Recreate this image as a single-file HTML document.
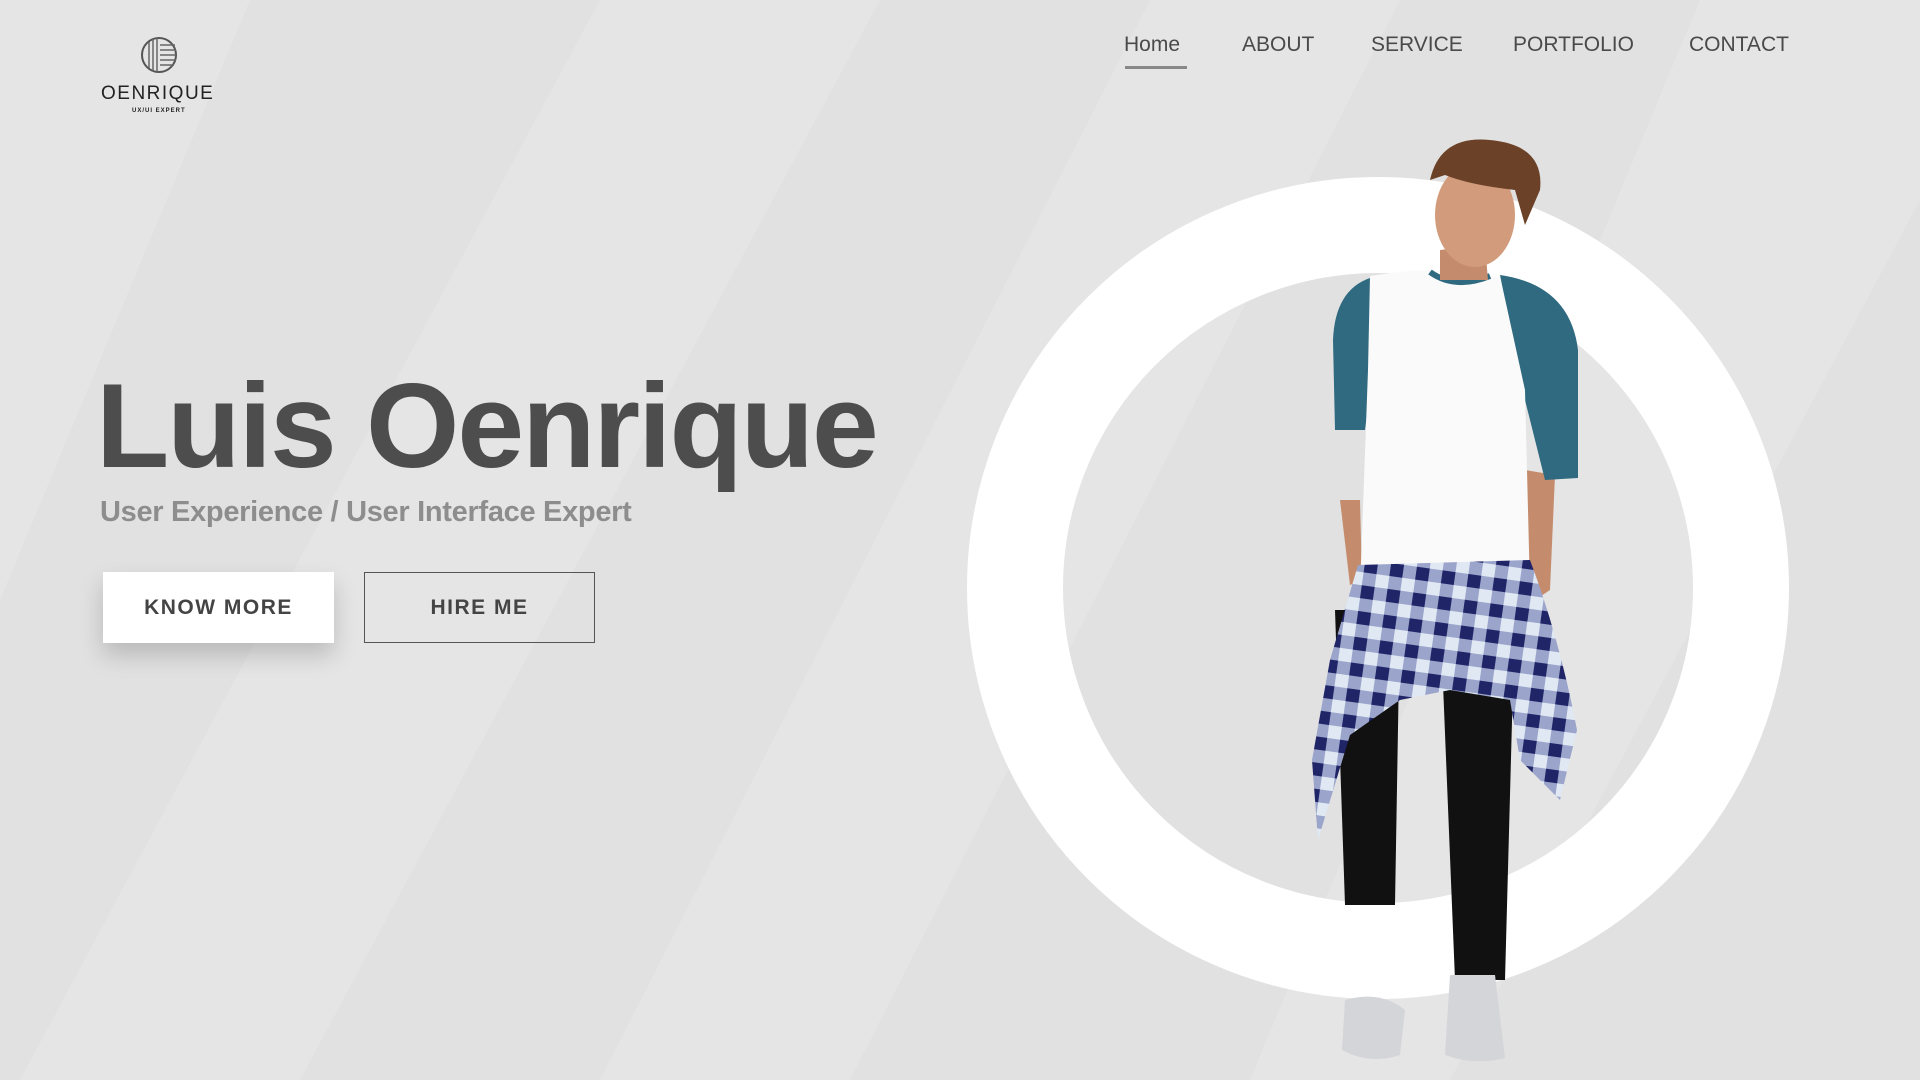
<!DOCTYPE html>
<html><head><meta charset="utf-8"><style>
*{margin:0;padding:0;box-sizing:border-box}
html,body{width:1920px;height:1080px;overflow:hidden}
body{background:#e1e1e1;font-family:"Liberation Sans",sans-serif;position:relative}
.bg{position:absolute;inset:0}
.nav a{position:absolute;top:33px;font-size:21px;color:#4a4a4a;text-decoration:none}
h1{position:absolute;left:96px;top:366px;font-size:120px;font-weight:bold;color:#4d4d4d;letter-spacing:-2px;line-height:1}
.sub{position:absolute;left:100px;top:496px;font-size:29px;font-weight:bold;color:#8d8d8d;letter-spacing:-0.3px}
.btn{position:absolute;top:572px;width:231px;height:71px;font-size:21px;font-weight:bold;letter-spacing:1.5px;color:#444;display:flex;align-items:center;justify-content:center}
</style></head><body>
<svg class="bg" width="1920" height="1080">
<g fill="#e8e8e8" opacity=".6">
<polygon points="0,0 250,0 0,600"/>
<polygon points="600,0 880,0 300,1080 20,1080"/>
<polygon points="1150,0 1400,0 850,1080 600,1080"/>
<polygon points="1700,0 1920,0 1920,200 1450,1080 1250,1080"/>
</g>
<circle cx="1378" cy="588" r="363" fill="none" stroke="#fff" stroke-width="96"/>
<defs>
<pattern id="pl" width="26" height="26" patternUnits="userSpaceOnUse" patternTransform="rotate(8)">
<rect width="26" height="26" fill="#dfe8f3"/>
<rect width="13" height="26" fill="#8a94c0" opacity=".8"/>
<rect width="26" height="13" fill="#8a94c0" opacity=".8"/>
<rect width="13" height="13" fill="#1f2566"/>
</pattern>
</defs>
<path d="M1335 610 L1400 610 L1395 905 L1345 905 Z" fill="#111"/>
<path d="M1440 610 L1515 610 L1505 980 L1455 980 Z" fill="#111"/>
<path d="M1345 1000 Q1380 990 1405 1010 L1400 1055 Q1370 1065 1342 1050 Z" fill="#d4d5d8"/>
<path d="M1450 975 L1495 975 L1505 1058 Q1475 1066 1445 1055 Z" fill="#d4d5d8"/>
<path d="M1340 500 L1360 500 L1362 580 L1350 585 Z" fill="#c48c6c"/>
<path d="M1525 470 L1555 475 L1550 590 L1535 600 L1528 560 Z" fill="#c48c6c"/>
<path d="M1370 278 Q1335 290 1333 340 L1335 430 L1365 430 L1375 350 Z" fill="#2f6a80"/>
<path d="M1500 275 Q1570 285 1578 350 L1578 478 L1545 480 L1520 380 Z" fill="#2f6a80"/>
<path d="M1370 276 Q1420 268 1440 272 Q1470 280 1500 276 L1525 390 L1530 590 L1360 590 L1368 370 Z" fill="#fafafa"/>
<path d="M1430 272 Q1455 290 1490 276" stroke="#2f6a80" stroke-width="6" fill="none"/>
<path d="M1358 565 L1530 560 Q1560 640 1577 730 L1560 800 L1520 760 L1510 700 L1450 690 L1400 700 L1350 735 L1318 840 L1312 760 L1330 660 Z" fill="url(#pl)"/>
<path d="M1440 250 L1485 245 L1488 280 L1440 280 Z" fill="#c48c6c"/>
<ellipse cx="1475" cy="215" rx="40" ry="52" fill="#d29c7c"/>
<path d="M1430 180 Q1440 135 1490 140 Q1545 145 1540 190 L1525 225 L1515 190 Q1470 185 1445 175 Z" fill="#6b4128"/>
</svg>
<svg style="position:absolute;left:140px;top:36px" width="38" height="38" viewBox="0 0 38 38">
<circle cx="19" cy="19" r="17" fill="none" stroke="#555" stroke-width="2"/>
<g stroke="#666" stroke-width="1.5"><line x1="9" y1="6" x2="9" y2="32"/><line x1="13" y1="3" x2="13" y2="35"/><line x1="17" y1="2" x2="17" y2="36"/>
<line x1="20" y1="9" x2="35" y2="9"/><line x1="20" y1="14" x2="36" y2="14"/><line x1="20" y1="19" x2="36" y2="19"/><line x1="20" y1="24" x2="36" y2="24"/><line x1="20" y1="29" x2="34" y2="29"/></g>
</svg>
<div style="position:absolute;left:101px;top:83px;font-size:19px;letter-spacing:1.5px;color:#222">OENRIQUE</div>
<div style="position:absolute;left:132px;top:108px;font-size:6px;font-weight:bold;letter-spacing:1px;color:#222">UX/UI EXPERT</div>
<div class="nav">
<a style="left:1124px">Home</a>
<div style="position:absolute;left:1125px;top:66px;width:62px;height:3px;background:#888"></div>
<a style="left:1242px">ABOUT</a>
<a style="left:1371px">SERVICE</a>
<a style="left:1513px">PORTFOLIO</a>
<a style="left:1689px">CONTACT</a>
</div>
<h1>Luis Oenrique</h1>
<div class="sub">User Experience / User Interface Expert</div>
<div class="btn" style="left:103px;background:#fff;box-shadow:0 12px 22px rgba(0,0,0,.18)">KNOW MORE</div>
<div class="btn" style="left:364px;border:1.5px solid #555">HIRE ME</div>
</body></html>
